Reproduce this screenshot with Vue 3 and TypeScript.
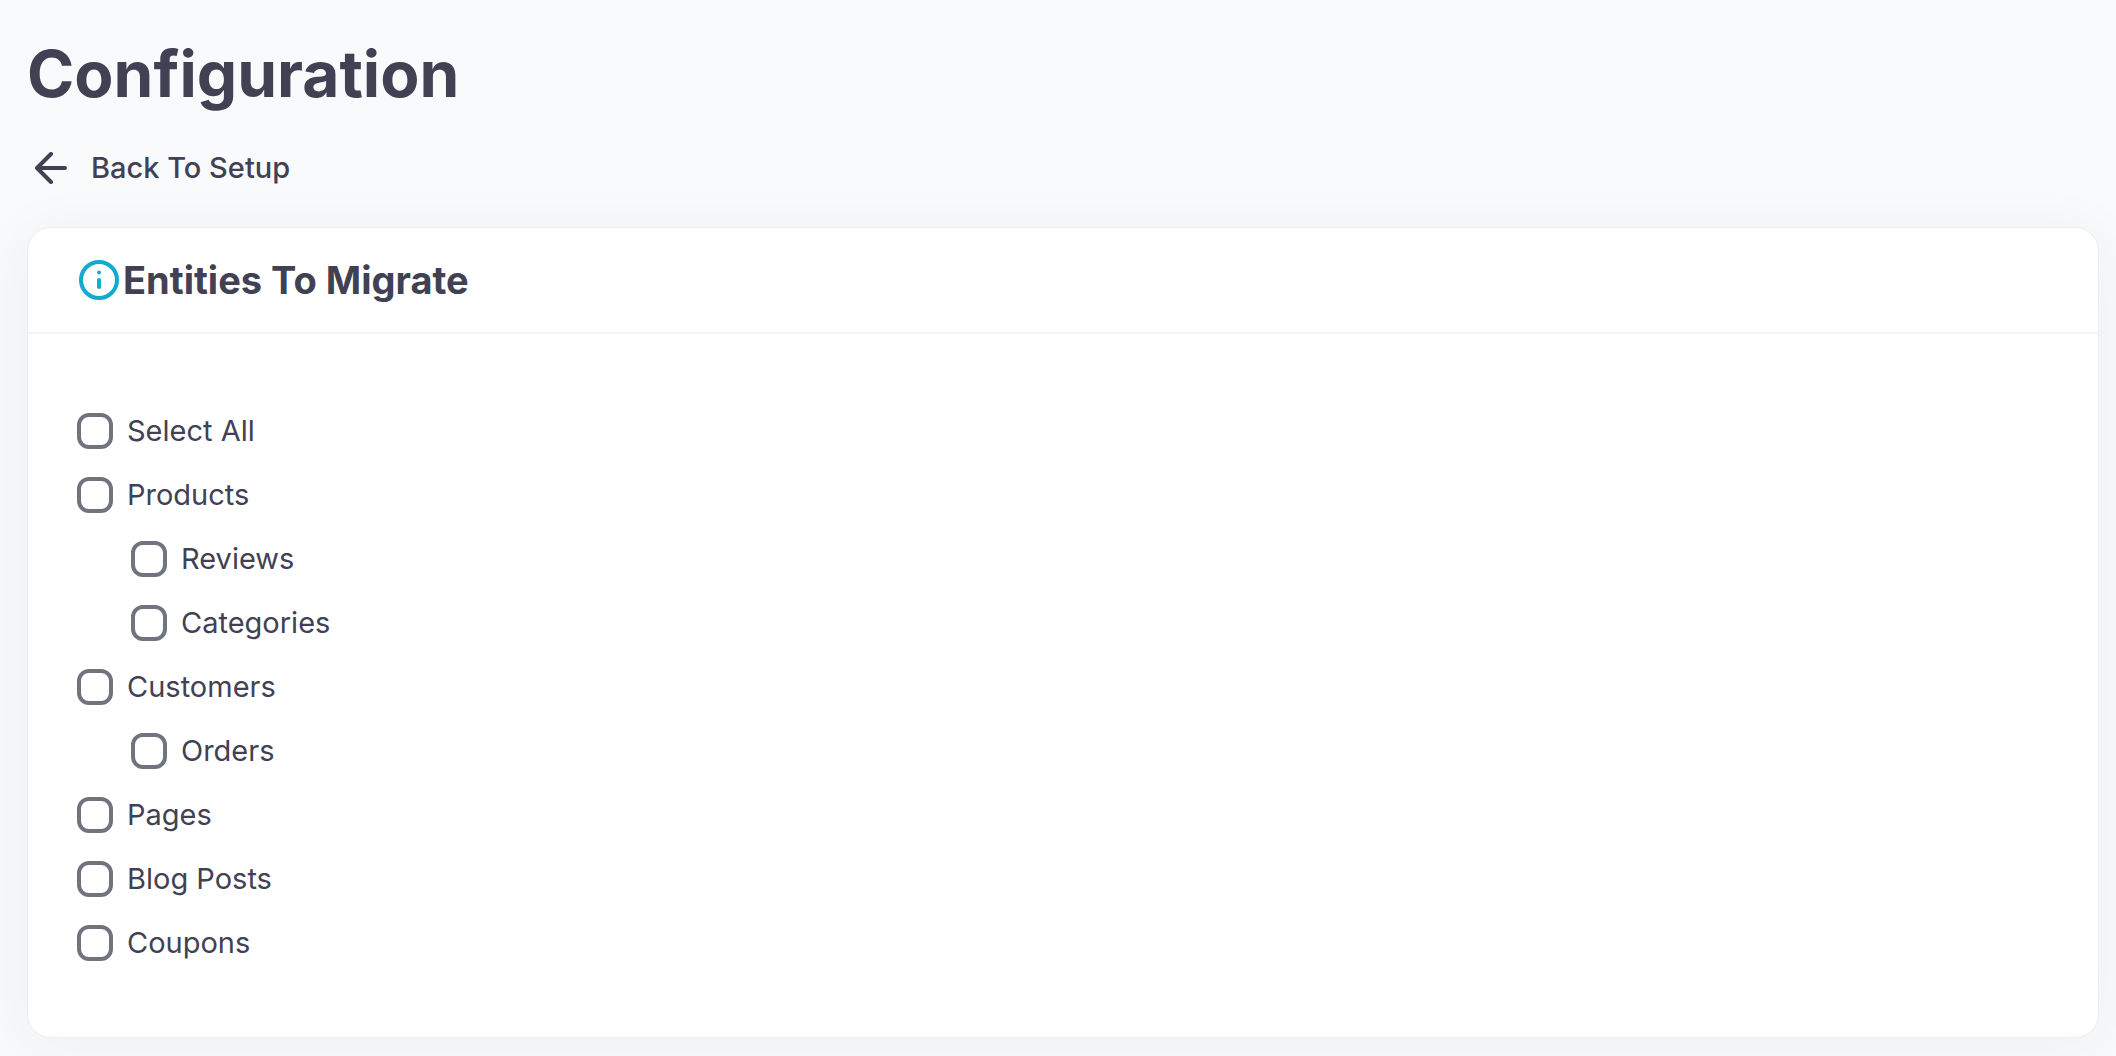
<script setup lang="ts">
import { reactive } from 'vue'

interface Entity {
  id: string
  label: string
  nested?: boolean
}

const entities: Entity[] = [
  { id: 'all', label: 'Select All' },
  { id: 'products', label: 'Products' },
  { id: 'reviews', label: 'Reviews', nested: true },
  { id: 'categories', label: 'Categories', nested: true },
  { id: 'customers', label: 'Customers' },
  { id: 'orders', label: 'Orders', nested: true },
  { id: 'pages', label: 'Pages' },
  { id: 'posts', label: 'Blog Posts' },
  { id: 'coupons', label: 'Coupons' },
]

const selected = reactive<Record<string, boolean>>({})

function toggle(id: string, event: Event) {
  const checked = (event.target as HTMLInputElement).checked
  if (id === 'all') {
    entities.forEach((entity) => { selected[entity.id] = checked })
  } else {
    selected[id] = checked
  }
}
</script>

<template>
  <main class="page">
    <h1 class="title">Configuration</h1>
    <a class="back" href="#">
      <svg class="back-icon" viewBox="0 0 32 32" fill="none" stroke="currentColor" stroke-width="4" stroke-linecap="round" stroke-linejoin="round" aria-hidden="true">
        <path d="M30 16H2M16 2L2 16l14 14" />
      </svg>
      <span>Back To Setup</span>
    </a>
    <section class="card">
      <header class="card-header">
        <svg class="info-icon" viewBox="0 0 40 40" fill="none" aria-hidden="true">
          <circle cx="20" cy="20" r="18" stroke="currentColor" stroke-width="4" />
          <circle cx="20" cy="12.5" r="2" fill="currentColor" />
          <path d="M20 20v7" stroke="currentColor" stroke-width="4" stroke-linecap="round" />
        </svg>
        <h2 class="card-title">Entities To Migrate</h2>
      </header>
      <ul class="entities">
        <li v-for="entity in entities" :key="entity.id" class="entity" :class="{ nested: entity.nested }">
          <input :id="entity.id" class="check" type="checkbox" :checked="selected[entity.id]" @change="toggle(entity.id, $event)">
          <label :for="entity.id">{{ entity.label }}</label>
        </li>
      </ul>
    </section>
  </main>
</template>

<style>
body {
  background: #f9fafc;
}
</style>

<style scoped>
.page {
  padding: 32px 17px 18px 27px;
  color: #424154;
  font-family: Inter, sans-serif;
  font-size: 29px;
  line-height: 40px;
}

.title {
  margin: 0;
  font-size: 64px;
  font-weight: 700;
  line-height: 84px;
}

.back {
  display: flex;
  align-items: center;
  gap: 24px;
  width: fit-content;
  margin: 32px 0 39px 8px;
  color: inherit;
  font-weight: 500;
  text-decoration: none;
}

.back-icon {
  width: 32px;
  height: 32px;
}

.card {
  border: 1px solid #eceeef;
  border-radius: 24px;
  background: #fff;
  box-shadow: 0 8px 60px rgba(30, 50, 50, 0.06);
}

.card-header {
  display: flex;
  align-items: center;
  gap: 4px;
  height: 104px;
  padding: 0 51px;
  border-bottom: 2px solid #f2f4f5;
}

.info-icon {
  width: 40px;
  height: 40px;
  color: #12abd0;
}

.card-title {
  margin: 0;
  font-size: 38px;
  font-weight: 700;
  line-height: 48px;
}

.entities {
  display: flex;
  flex-direction: column;
  gap: 24px;
  margin: 0;
  padding: 77px 49px 74px;
  list-style: none;
}

.entity {
  display: flex;
  align-items: center;
  gap: 14px;
}

.nested {
  padding-left: 54px;
}

.check {
  appearance: none;
  box-sizing: border-box;
  width: 36px;
  height: 36px;
  margin: 0;
  border: 4px solid #70747f;
  border-radius: 12px;
  background: #fff;
}

.check:checked {
  background: #12abd0;
}
</style>
